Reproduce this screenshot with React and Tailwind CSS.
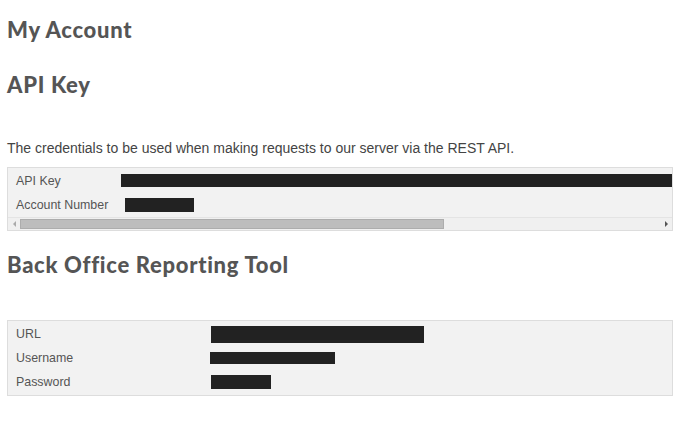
import React from "react";

const Redacted = ({ className }) => <span className={`block bg-[#222] ${className}`} />;

const Row = ({ label, children, labelWidth }) => (
  <div className="flex items-center h-[24px]">
    <span className={`shrink-0 pl-[8px] ${labelWidth}`}>{label}</span>
    {children}
  </div>
);

const App = () => {
  return (
    <div className="bg-white w-[690px] h-[424px] overflow-hidden px-[7px] text-[#555] font-['Liberation_Sans',Arial,sans-serif]">
      {/* headings */}
      <h1 className="pt-[16px] text-[22px] leading-[28px] font-black tracking-[0.7px] text-[#555] font-['Lato',sans-serif]">
        My Account
      </h1>
      <h2 className="mt-[27px] text-[22px] leading-[28px] font-black tracking-[0.7px] text-[#555] font-['Lato',sans-serif]">
        API Key
      </h2>

      <p className="mt-[40px] text-[14px] leading-[18px] text-[#444]">
        The credentials to be used when making requests to our server via the REST API.
      </p>

      {/* API credentials */}
      <div className="mt-[10px] w-[666px] border border-[#ddd] bg-[#f2f2f2] text-[12.4px]">
        <div className="pt-[1px] overflow-hidden">
          <Row label="API Key" labelWidth="w-[113px]">
            <Redacted className="w-[560px] h-[13px] -mt-[2px]" />
          </Row>
          <Row label="Account Number" labelWidth="w-[117px]">
            <Redacted className="w-[69px] h-[14px]" />
          </Row>
        </div>
        {/* scrollbar */}
        <div className="flex items-center h-[13px] bg-[#f0f0f0] border-t border-[#e4e4e4]">
          <span className="w-[12px] flex justify-center">
            <span className="border-y-[3px] border-y-transparent border-r-[3px] border-r-[#aaa]" />
          </span>
          <span className="block h-[10px] w-[424px] bg-[#bdbdbd] border border-[#adadad]" />
          <span className="flex-1" />
          <span className="w-[12px] flex justify-center">
            <span className="border-y-[3px] border-y-transparent border-l-[3px] border-l-[#555]" />
          </span>
        </div>
      </div>

      <h2 className="mt-[20px] text-[22px] leading-[28px] font-black tracking-[0.7px] text-[#555] font-['Lato',sans-serif]">
        Back Office Reporting Tool
      </h2>

      {/* back office */}
      <div className="mt-[41px] w-[666px] border border-[#ddd] bg-[#f2f2f2] text-[12.4px] py-[1px]">
        <Row label="URL" labelWidth="w-[203px]">
          <Redacted className="w-[213px] h-[17px]" />
        </Row>
        <Row label="Username" labelWidth="w-[202px]">
          <Redacted className="w-[125px] h-[12px]" />
        </Row>
        <Row label="Password" labelWidth="w-[203px]">
          <Redacted className="w-[60px] h-[14px]" />
        </Row>
      </div>
    </div>
  );
};

export default App;
